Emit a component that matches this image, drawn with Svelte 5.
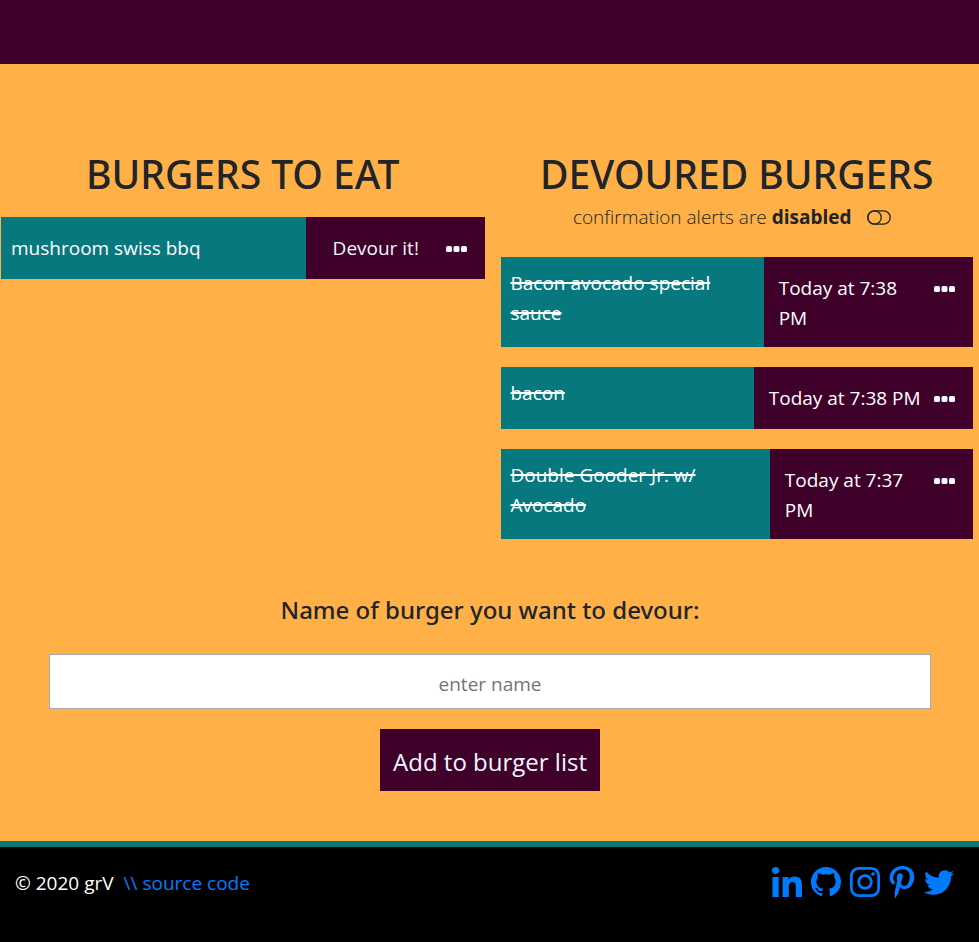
<script>
  let burgerName = $state('');
  let alertsEnabled = $state(false);

  const waiting = [{ name: 'mushroom swiss bbq', share: 63 }];
  const devoured = [
    { name: 'Bacon avocado special sauce', when: 'Today at 7:38 PM', share: 55.7 },
    { name: 'bacon', when: 'Today at 7:38 PM', share: 53.6 },
    { name: 'Double Gooder Jr. w/ Avocado', when: 'Today at 7:37 PM', share: 57 }
  ];
</script>

{#snippet dots()}
  <button class="more" type="button" aria-label="More options">
    <svg width="21" height="6" viewBox="0 0 21 6" aria-hidden="true">
      <rect x="0" y="0" width="6" height="6" rx="1.5" />
      <rect x="7.5" y="0" width="6" height="6" rx="1.5" />
      <rect x="15" y="0" width="6" height="6" rx="1.5" />
    </svg>
  </button>
{/snippet}

<div class="page">
  <header></header>

  <main>
    <div class="columns">
      <section class="waiting">
        <h1>BURGERS TO EAT</h1>
        {#each waiting as burger}
          <div class="burger">
            <div class="name" style:width="{burger.share}%">{burger.name}</div>
            <div class="actions">
              <button class="devour" type="button">Devour it!</button>
              {@render dots()}
            </div>
          </div>
        {/each}
      </section>

      <section class="devoured">
        <h1>DEVOURED BURGERS</h1>
        <p class="alerts">
          <span>confirmation alerts are <strong>{alertsEnabled ? 'enabled' : 'disabled'}</strong></span>
          <button
            class="toggle"
            type="button"
            aria-label="Toggle confirmation alerts"
            aria-pressed={alertsEnabled}
            onclick={() => (alertsEnabled = !alertsEnabled)}
          >
            <svg width="24" height="15" viewBox="0 0 24 15" aria-hidden="true">
              <rect x="0.8" y="0.8" width="22.4" height="13.4" rx="6.7" />
              <circle cx={alertsEnabled ? 16.5 : 7.5} cy="7.5" r="6.7" />
            </svg>
          </button>
        </p>
        {#each devoured as burger}
          <div class="burger">
            <div class="name" style:width="{burger.share}%"><s>{burger.name}</s></div>
            <div class="actions">
              <span class="when">{burger.when}</span>
              {@render dots()}
            </div>
          </div>
        {/each}
      </section>
    </div>

    <form onsubmit={(event) => event.preventDefault()}>
      <label for="burger-name">Name of burger you want to devour:</label>
      <input id="burger-name" type="text" placeholder="enter name" bind:value={burgerName} />
      <button class="add" type="submit">Add to burger list</button>
    </form>
  </main>

  <footer>
    <p><span>© 2020 grV</span> <a href="#source">\\ source code</a></p>
    <nav aria-label="Social links">
      <a href="#linkedin" aria-label="LinkedIn">
        <svg width="30" height="30" viewBox="0 0 448 448" aria-hidden="true">
          <path d="M100.28 448H7.4V148.9h92.88zM53.79 108.1C24.09 108.1 0 83.5 0 53.8a53.79 53.79 0 0 1 107.58 0c0 29.7-24.1 54.3-53.79 54.3zM447.9 448h-92.68V302.4c0-34.7-.7-79.2-48.29-79.2-48.29 0-55.69 37.7-55.69 76.7V448h-92.78V148.9h89.08v40.8h1.3c12.4-23.5 42.69-48.3 87.88-48.3 94 0 111.28 61.9 111.28 142.3V448z" />
        </svg>
      </a>
      <a href="#github" aria-label="GitHub">
        <svg width="30" height="30" viewBox="0 0 16 16" aria-hidden="true">
          <path d="M8 0C3.58 0 0 3.58 0 8c0 3.54 2.29 6.53 5.47 7.59.4.07.55-.17.55-.38 0-.19-.01-.82-.01-1.49-2.01.37-2.53-.49-2.69-.94-.09-.23-.48-.94-.82-1.13-.28-.15-.68-.52-.01-.53.63-.01 1.08.58 1.23.82.72 1.21 1.87.87 2.33.66.07-.52.28-.87.51-1.07-1.78-.2-3.64-.89-3.64-3.95 0-.87.31-1.59.82-2.15-.08-.2-.36-1.02.08-2.12 0 0 .67-.21 2.2.82.64-.18 1.32-.27 2-.27.68 0 1.36.09 2 .27 1.53-1.04 2.2-.82 2.2-.82.44 1.1.16 1.92.08 2.12.51.56.82 1.27.82 2.15 0 3.07-1.87 3.75-3.65 3.95.29.25.54.73.54 1.48 0 1.07-.01 1.93-.01 2.2 0 .21.15.46.55.38A8.01 8.01 0 0 0 16 8c0-4.42-3.58-8-8-8z" />
        </svg>
      </a>
      <a href="#instagram" aria-label="Instagram">
        <svg width="30" height="30" viewBox="0 0 30 30" aria-hidden="true">
          <rect class="line" x="1.35" y="1.35" width="27.3" height="27.3" rx="7.2" />
          <circle class="line" cx="15" cy="15" r="6.3" />
          <circle cx="23" cy="7" r="1.8" />
        </svg>
      </a>
      <a href="#pinterest" aria-label="Pinterest">
        <svg width="26" height="32" viewBox="0 6 384 500" aria-hidden="true">
          <path d="M204 6.5C101.4 6.5 0 74.9 0 185.6 0 256 39.6 296 63.6 296c9.9 0 15.6-27.6 15.6-35.4 0-9.3-23.7-29.1-23.7-67.8 0-80.4 61.2-137.4 140.4-137.4 68.1 0 118.5 38.7 118.5 109.8 0 53.1-21.3 152.7-90.3 152.7-24.9 0-46.2-18-46.2-43.8 0-37.8 26.4-74.4 26.4-113.4 0-66.2-93.9-54.2-93.9 25.8 0 16.8 2.1 35.4 9.6 50.7-13.8 59.4-42 147.9-42 209.1 0 18.9 2.7 37.5 4.5 56.4 3.4 3.8 1.7 3.4 6.9 1.5 50.4-69 48.6-82.5 71.4-172.8 12.3 23.4 44.1 36 69.3 36 106.2 0 153.9-103.5 153.9-196.8C384 71.3 298.2 6.5 204 6.5z" />
        </svg>
      </a>
      <a href="#twitter" aria-label="Twitter">
        <svg width="30" height="25" viewBox="0 48 512 416" aria-hidden="true">
          <path d="M459.37 151.716c.325 4.548.325 9.097.325 13.645 0 138.72-105.583 298.558-298.558 298.558-59.452 0-114.68-17.219-161.137-47.106 8.447.974 16.568 1.299 25.34 1.299 49.055 0 94.213-16.568 130.274-44.832-46.132-.975-84.792-31.188-98.112-72.772 6.498.974 12.995 1.624 19.818 1.624 9.421 0 18.843-1.3 27.614-3.573-48.081-9.747-84.143-51.98-84.143-102.985v-1.299c13.969 7.797 30.214 12.67 47.431 13.319-28.264-18.843-46.781-51.005-46.781-87.391 0-19.492 5.197-37.36 14.294-52.954 51.655 63.675 129.3 105.258 216.365 109.807-1.624-7.797-2.599-15.918-2.599-24.04 0-57.828 46.782-104.934 104.934-104.934 30.213 0 57.502 12.67 76.67 33.137 23.715-4.548 46.456-13.32 66.599-25.34-7.798 24.366-24.366 44.833-46.132 57.827 21.117-2.273 41.584-8.122 60.426-16.243-14.292 20.791-32.161 39.308-52.628 54.253z" />
        </svg>
      </a>
    </nav>
  </footer>
</div>

<style>
  .page {
    display: flex;
    flex-direction: column;
    min-height: 100vh;
    background: #ffb047;
    color: #212529;
    font: 400 19px/30px 'Open Sans', 'Noto Sans', sans-serif;
  }

  .page :is(h1, p) {
    margin: 0;
  }

  button {
    padding: 0;
    border: 0;
    background: none;
    color: inherit;
    font: inherit;
    cursor: pointer;
  }

  header {
    height: 64px;
    background: #3f0029;
  }

  main {
    padding: 86px 0 50px;
  }

  .columns {
    display: grid;
    grid-template-columns: 1fr 1fr;
  }

  .waiting {
    padding: 0 5px 0 1px;
  }

  .devoured {
    padding: 0 6px 0 11px;
  }

  .page h1 {
    margin-bottom: 19px;
    font-family: 'Noto Sans', 'Open Sans', sans-serif;
    font-size: 39px;
    font-weight: 500;
    line-height: 48px;
    text-align: center;
  }

  .page .devoured h1 {
    margin-bottom: 4px;
  }

  .page .alerts {
    display: flex;
    justify-content: center;
    align-items: center;
    gap: 15px;
    margin-bottom: 25px;
    padding-right: 10px;
    font-weight: 300;
  }

  strong {
    font-weight: 700;
  }

  .toggle {
    display: flex;
  }

  .toggle svg {
    fill: none;
    stroke: #212529;
    stroke-width: 1.3;
  }

  .burger {
    display: flex;
    min-height: 62px;
    color: #fff;
  }

  .burger + .burger {
    margin-top: 20px;
  }

  .name {
    flex: none;
    box-sizing: border-box;
    padding: 11px 50px 19px 10px;
    background: #08787f;
  }

  .waiting .name {
    padding-block: 16px 14px;
  }

  s {
    text-decoration-thickness: 2px;
  }

  .actions {
    flex: 1;
    display: flex;
    justify-content: space-between;
    align-items: flex-start;
    gap: 8px;
    padding: 16px 18px 0 15px;
    background: #3f0029;
  }

  .devour {
    padding-left: 12px;
    color: aliceblue;
  }

  .more {
    display: flex;
    align-items: center;
    height: 32px;
  }

  .more svg {
    fill: aliceblue;
  }

  form {
    display: flex;
    flex-direction: column;
    align-items: center;
    gap: 20px;
    padding: 56px 48px 0 49px;
  }

  label {
    margin-bottom: 9px;
    font-family: 'Noto Sans', 'Open Sans', sans-serif;
    font-size: 24px;
    font-weight: 500;
  }

  input {
    box-sizing: border-box;
    width: 100%;
    height: 55px;
    padding: 4px 10px 0;
    border: 1px solid #a9a9a9;
    background: #fff;
    color: #212529;
    font: inherit;
    text-align: center;
  }

  input::placeholder {
    color: #757575;
    opacity: 1;
  }

  .add {
    height: 62px;
    padding: 4px 13px 0;
    background: #3f0029;
    color: aliceblue;
    font-size: 24px;
  }

  footer {
    flex: 1;
    display: flex;
    justify-content: space-between;
    align-items: flex-start;
    padding: 19px 25px 30px 15px;
    border-top: 6px solid #08787f;
    background: #000;
    color: #fff;
  }

  footer p {
    display: flex;
    flex-wrap: wrap;
    column-gap: 10px;
    padding-top: 2px;
  }

  footer a {
    color: #007bff;
    text-decoration: none;
  }

  nav {
    display: flex;
    align-items: center;
    gap: 9px;
  }

  nav a {
    display: flex;
  }

  nav svg {
    fill: #007bff;
  }

  nav .line {
    fill: none;
    stroke: #007bff;
    stroke-width: 2.7;
  }
</style>
